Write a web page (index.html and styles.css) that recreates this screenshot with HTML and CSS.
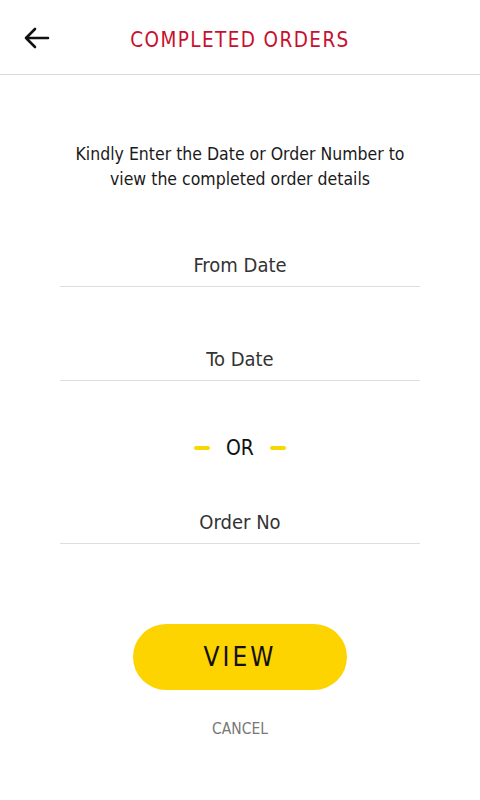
FILE: index.html
```html
<!DOCTYPE html>
<html lang="en">
    <head>
        <meta charset="UTF-8" />
        <meta name="viewport" content="width=device-width, initial-scale=1.0" />
        <title>Completed orders</title>
        <link rel="stylesheet" href="styles.css">
    </head>
    <body>
        <header class="topbar">
            <button class="back" aria-label="Back">
                <svg width="27" height="22" viewBox="0 0 27 22">
                    <path d="M25 11H3M12 2L3 11l9 9" fill="none" stroke="#111" stroke-width="2.6" stroke-linecap="round" stroke-linejoin="round"/>
                </svg>
            </button>
            <h1 class="title">COMPLETED ORDERS</h1>
        </header>

        <main class="content">
            <p class="intro">Kindly Enter the Date or Order Number to<br>view the completed order details</p>

            <form class="search" action="">
                <input class="field" type="text" placeholder="From Date" />
                <input class="field" type="text" placeholder="To Date" />

                <div class="or">
                    <span class="dash"></span>
                    <span>OR</span>
                    <span class="dash"></span>
                </div>

                <input class="field field-order" type="text" placeholder="Order No" />

                <button class="view">VIEW</button>
                <a class="cancel" href="#">CANCEL</a>
            </form>
        </main>
    </body>
</html>
```

FILE: styles.css
```css
body {
    margin: 0;
    background: #fff;
    font-family: "DejaVu Sans Condensed", "DejaVu Sans", sans-serif;
    font-stretch: condensed;
    color: #222;
}

.topbar {
    height: 74px;
    border-bottom: 1px solid #dcdcdc;
    display: flex;
    align-items: center;
    justify-content: center;
    position: relative;
}
.back {
    position: absolute;
    left: 23px;
    top: 27px;
    background: none;
    border: none;
    padding: 0;
    cursor: pointer;
}
.title {
    margin: 6px 0 0;
    font-size: 20.5px;
    font-weight: normal;
    letter-spacing: 1.4px;
    color: #c8102e;
}

.content {
    padding: 0 60px;
}
.intro {
    margin: 67px 0 0;
    text-align: center;
    font-size: 17.5px;
    line-height: 25px;
    color: #1a1a1a;
}

.search {
    display: flex;
    flex-direction: column;
    align-items: center;
}
.field {
    width: 100%;
    box-sizing: border-box;
    border: none;
    border-bottom: 1.5px solid #dedede;
    padding: 0 0 6px;
    height: 37px;
    text-align: center;
    font-family: inherit;
    font-stretch: condensed;
    font-size: 20px;
    font-weight: 300;
    color: #333;
    background: none;
}
.field::placeholder {
    color: #333;
}
.field:focus {
    outline: none;
}
.search .field:first-child {
    margin-top: 58px;
}
.search .field:nth-child(2) {
    margin-top: 57px;
}

.or {
    display: flex;
    align-items: center;
    gap: 16px;
    margin-top: 55px;
    font-size: 21px;
    font-weight: 500;
    color: #111;
}
.dash {
    width: 16px;
    height: 4px;
    border-radius: 2px;
    background: #f5d800;
}

.field-order {
    margin-top: 47px;
}

.view {
    margin-top: 80px;
    width: 214px;
    height: 66px;
    border: none;
    border-radius: 33px;
    background: #fdd300;
    font-family: inherit;
    font-stretch: condensed;
    font-size: 26px;
    letter-spacing: 3px;
    color: #111;
    cursor: pointer;
}
.cancel {
    margin-top: 30px;
    font-size: 15.5px;
    font-weight: 500;
    color: #777;
    text-decoration: none;
}
```
